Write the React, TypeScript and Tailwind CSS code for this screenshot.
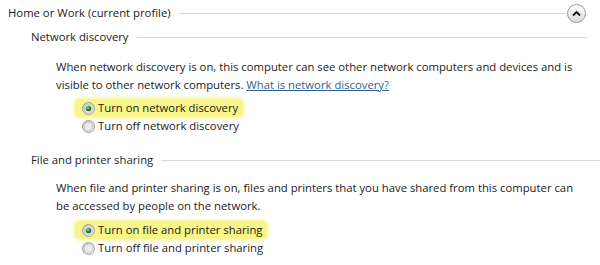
import React from 'react';

const font = { fontFamily: '"Open Sans", "Noto Sans", Arial, sans-serif' };

function Radio({ checked }: { checked: boolean }) {
  return (
    <svg width="13" height="13" viewBox="0 0 13 13" className="shrink-0">
      <defs>
        <linearGradient id="ring" x1="0" y1="0" x2="1" y2="1">
          <stop offset="0" stopColor="#c9c9c9" />
          <stop offset="1" stopColor="#f4f4f4" />
        </linearGradient>
        <radialGradient id="dot" cx="0.4" cy="0.35" r="0.7">
          <stop offset="0" stopColor="#8be08b" />
          <stop offset="0.5" stopColor="#2f8f2f" />
          <stop offset="1" stopColor="#0e4f12" />
        </radialGradient>
      </defs>
      <circle cx="6.5" cy="6.5" r="6" fill="url(#ring)" stroke="#8d8d8d" strokeWidth="0.8" />
      <circle cx="6.5" cy="6.5" r="4.2" fill="#ececec" stroke="#b5b5b5" strokeWidth="0.6" />
      {checked && <circle cx="6.5" cy="6.5" r="2.8" fill="url(#dot)" />}
    </svg>
  );
}

function Option({ label, checked }: { label: string; checked: boolean }) {
  return (
    <div className="h-[18px] flex items-center">
      <div
        className={
          'flex items-center h-[18px] pl-[7px] pr-[5px] rounded-[5px] ' +
          (checked ? 'bg-[#f8f58a] shadow-[0_0_3px_2px_#fbf9b0]' : '')
        }
      >
        <Radio checked={checked} />
        <span className="ml-[3px] text-[11.3px] text-[#1b1b1b] whitespace-nowrap">{label}</span>
      </div>
    </div>
  );
}

function Heading({ title, children }: { title: string; children?: React.ReactNode }) {
  return (
    <div className="flex flex-1 items-center">
      <span className="text-[11.3px] text-[#1b1b1b] whitespace-nowrap">{title}</span>
      <div className="flex-1 ml-[8px] h-px bg-[#d5d9dc]" />
      {children}
    </div>
  );
}

export default function App() {
  return (
    <div className="w-[600px] h-[265px] bg-white overflow-hidden" style={font}>
      <div className="h-[26px] flex items-center pl-[8px] pr-[14px]">
        <Heading title="Home or Work (current profile)">
          <button className="ml-[1px] w-[19px] h-[19px] rounded-full border border-[#9a9a9a] bg-gradient-to-b from-white to-[#dcdcdc] flex items-center justify-center">
            <svg width="9" height="7" viewBox="0 0 9 7">
              <path d="M1 5.5 L4.5 2 L8 5.5" fill="none" stroke="#111" strokeWidth="1.8" />
            </svg>
          </button>
        </Heading>
      </div>

      <div className="h-[22px] flex items-center pl-[31px] pr-[13px]">
        <Heading title="Network discovery" />
      </div>

      <div className="mt-[10px] pl-[56px] text-[11.3px] leading-[18px] text-[#1b1b1b]">
        <div className="whitespace-nowrap">
          When network discovery is on, this computer can see other network computers and devices and is
        </div>
        <div className="whitespace-nowrap">
          visible to other network computers.{' '}
          <a className="text-[#2a5f8f] underline cursor-pointer">What is network discovery?</a>
        </div>
      </div>

      <div className="mt-[5px] pl-[75px]">
        <Option label="Turn on network discovery" checked />
        <Option label="Turn off network discovery" checked={false} />
      </div>

      <div className="mt-[14px] h-[22px] flex items-center pl-[31px]">
        <Heading title="File and printer sharing" />
      </div>

      <div className="mt-[8px] pl-[56px] text-[11.3px] leading-[18px] text-[#1b1b1b]">
        <div className="whitespace-nowrap">
          When file and printer sharing is on, files and printers that you have shared from this computer can
        </div>
        <div className="whitespace-nowrap">be accessed by people on the network.</div>
      </div>

      <div className="mt-[6px] pl-[75px]">
        <Option label="Turn on file and printer sharing" checked />
        <Option label="Turn off file and printer sharing" checked={false} />
      </div>
    </div>
  );
}
